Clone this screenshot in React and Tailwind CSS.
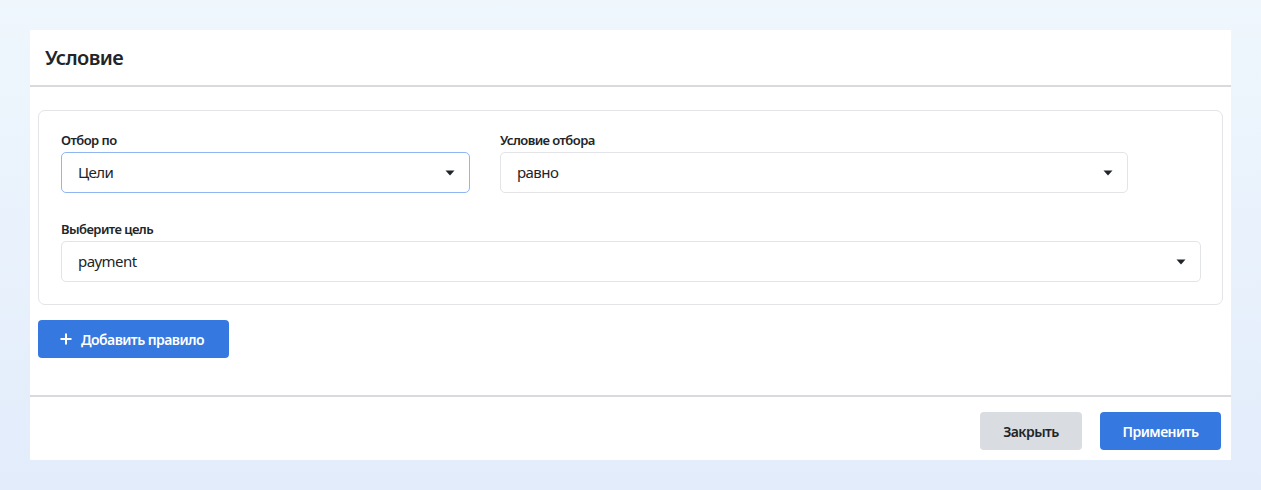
import React from "react";

const Caret = () => (
  <svg width="10" height="6" viewBox="0 0 10 6" className="shrink-0">
    <path d="M0.5 0.5h9L5 5.5z" fill="#212529" />
  </svg>
);

const Select = ({ value, width, focused }) => (
  <div
    className={`flex h-[41px] items-center justify-between rounded-[5px] border bg-white pl-[16px] pr-[14px] text-[15px] text-[#212529] ${
      focused ? "border-[#90b5f2]" : "border-[#e3e4e7]"
    } ${width}`}
  >
    <span>{value}</span>
    <Caret />
  </div>
);

const Field = ({ label, children }) => (
  <div className="flex flex-col">
    <div className="mb-[2px] h-[20px] text-[13px] font-semibold leading-[20px] text-[#212529]">
      {label}
    </div>
    {children}
  </div>
);

export default function App() {
  return (
    <div
      className="min-h-[490px] bg-gradient-to-b from-[#eff7fd] to-[#e2ecfb] pt-[30px] pl-[30px] tracking-[-0.035em]"
      style={{ fontFamily: '"Noto Sans", "Open Sans", sans-serif' }}
    >
      <div className="w-[1201px] bg-white">
        <div className="flex h-[57px] items-center border-b-2 border-[#d9dadd] pl-[15px]">
          <h2 className="text-[20px] font-semibold text-[#212529]">Условие</h2>
        </div>

        <div className="px-[8px] pt-[23px]">
          <div className="rounded-[7px] border border-[#e3e4e7] pl-[22px] pr-[21px] pt-[19px] pb-[22px]">
            <div className="flex gap-[30px]">
              <Field label="Отбор по">
                <Select value="Цели" width="w-[409px]" focused />
              </Field>
              <Field label="Условие отбора">
                <Select value="равно" width="w-[628px]" />
              </Field>
            </div>
            <div className="mt-[26px]">
              <Field label="Выберите цель">
                <Select value="payment" width="w-full" />
              </Field>
            </div>
          </div>

          <button className="mt-[15px] flex h-[38px] w-[191px] items-center gap-[9px] rounded-[4px] bg-[#3578e0] pl-[22px] text-[14px] font-semibold text-white">
            <svg width="12" height="12" viewBox="0 0 12 12">
              <path d="M6 0.5v11M0.5 6h11" stroke="white" strokeWidth="2" />
            </svg>
            Добавить правило
          </button>
        </div>

        <div className="mt-[37px] flex justify-end gap-[18px] border-t-2 border-[#d9dadd] pt-[15px] pb-[10px] pr-[10px]">
          <button className="h-[38px] w-[102px] rounded-[4px] bg-[#d9dce1] text-[14px] font-semibold text-[#212529]">
            Закрыть
          </button>
          <button className="h-[38px] w-[121px] rounded-[4px] bg-[#3578e0] text-[14px] font-semibold text-white">
            Применить
          </button>
        </div>
      </div>
    </div>
  );
}
